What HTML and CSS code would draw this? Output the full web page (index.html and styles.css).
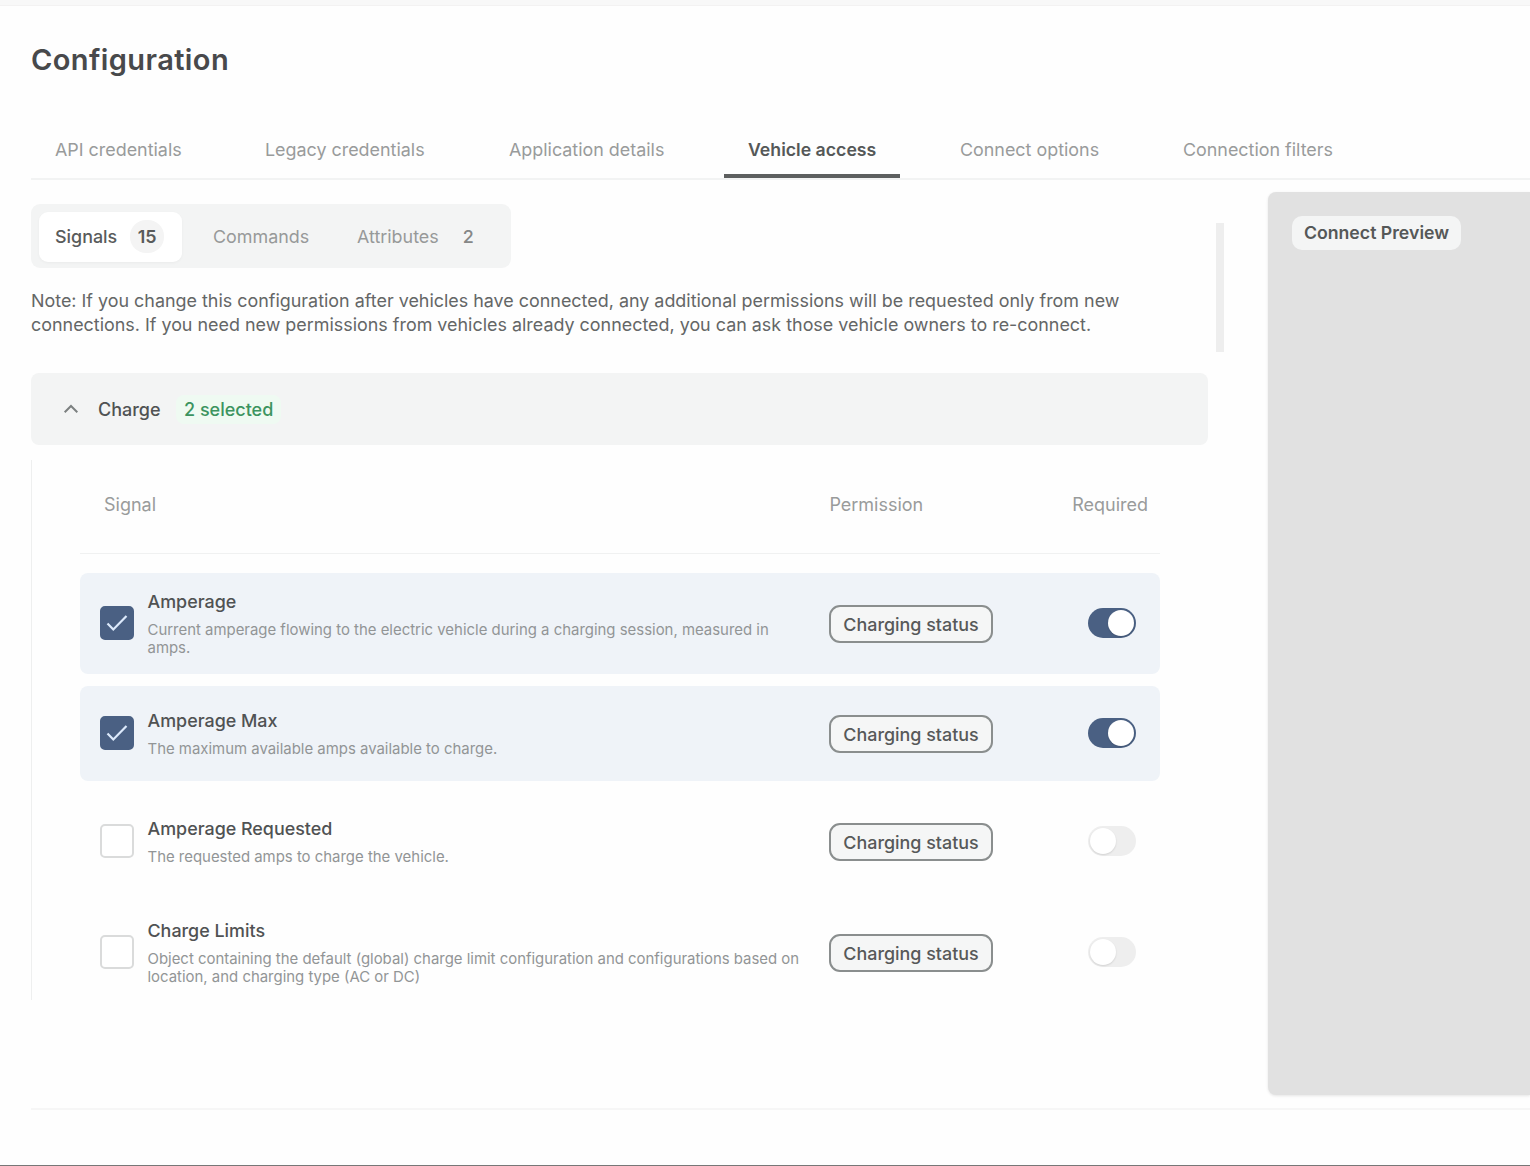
FILE: index.html
```html
<!DOCTYPE html>
<html lang="en">
<head>
<meta charset="utf-8">
<title>Configuration</title>
<link rel="stylesheet" href="styles.css">
</head>
<body>
<div class="page">
  <h1 class="title">Configuration</h1>
  <nav class="tabs">
    <a class="tab t-api">API credentials</a>
    <a class="tab t-legacy">Legacy credentials</a>
    <a class="tab t-app">Application details</a>
    <a class="tab tab-active">Vehicle access</a>
    <a class="tab t-opt">Connect options</a>
    <a class="tab t-filter">Connection filters</a>
  </nav>
  <div class="content">
    <main class="main">
      <div class="segments">
        <div class="segment segment-active"><span>Signals</span><span class="count">15</span></div>
        <div class="segment segment-commands"><span>Commands</span></div>
        <div class="segment segment-attributes"><span>Attributes</span><span class="count-plain">2</span></div>
      </div>
      <p class="note">Note: If you change this configuration after vehicles have connected, any additional permissions will be requested only from new<br>connections. If you need new permissions from vehicles already connected, you can ask those vehicle owners to re-connect.</p>
      <div class="group">
        <svg class="chevron" width="16" height="10" viewBox="0 0 16 10"><path d="M1.700 8.200 8 2l6.300 6.200" fill="none" stroke="#7c8080" stroke-width="2"/></svg>
        <span class="group-name">Charge</span>
        <span class="selected">2 selected</span>
      </div>
      <section class="table">
        <div class="head"><span class="col-signal">Signal</span><span class="col-permission">Permission</span><span class="col-required">Required</span></div>
        <div class="row row-on row-tall">
          <span class="check check-on"><svg width="22" height="18" viewBox="0 0 22 18"><path d="M1.500 9.500 7.300 15.500 20.500 2" fill="none" stroke="#dce9fb" stroke-width="2.200"/></svg></span>
          <div class="text"><div class="name">Amperage</div><div class="desc">Current amperage flowing to the electric vehicle during a charging session, measured in<br>amps.</div></div>
          <div class="permission"><span class="badge">Charging status</span></div>
          <span class="toggle toggle-on"></span>
        </div>
        <div class="row row-on row-short">
          <span class="check check-on"><svg width="22" height="18" viewBox="0 0 22 18"><path d="M1.500 9.500 7.300 15.500 20.500 2" fill="none" stroke="#dce9fb" stroke-width="2.200"/></svg></span>
          <div class="text"><div class="name">Amperage Max</div><div class="desc">The maximum available amps available to charge.</div></div>
          <div class="permission"><span class="badge">Charging status</span></div>
          <span class="toggle toggle-on"></span>
        </div>
        <div class="row row-short">
          <span class="check"></span>
          <div class="text"><div class="name">Amperage Requested</div><div class="desc">The requested amps to charge the vehicle.</div></div>
          <div class="permission"><span class="badge">Charging status</span></div>
          <span class="toggle"></span>
        </div>
        <div class="row row-tall">
          <span class="check"></span>
          <div class="text"><div class="name">Charge Limits</div><div class="desc">Object containing the default (global) charge limit configuration and configurations based on<br>location, and charging type (AC or DC)</div></div>
          <div class="permission"><span class="badge">Charging status</span></div>
          <span class="toggle"></span>
        </div>
      </section>
    </main>
    <div class="scrollbar"></div>
    <aside class="preview"><span class="preview-label">Connect Preview</span></aside>
  </div>
  <footer class="footer"></footer>
</div>
</body>
</html>
```
FILE: styles.css
```css
* { box-sizing: border-box; }
body { margin: 0; background: #fefefe; font-family: Inter, "Liberation Sans", sans-serif; color: #505253; }
.page { display: flex; flex-direction: column; width: 1530px; height: 1166px; padding-left: 31px; overflow: hidden; border-top: 5px solid #f8f8f8; border-bottom: 1px solid #777; box-shadow: inset 0 1px #f3f2f2; }
.title { margin: 35px 0 0; height: 40px; line-height: 40px; font-size: 29px; font-weight: 600; color: #48494b; letter-spacing: 0.4px; }
.tabs { display: flex; gap: 36px; height: 60px; margin-top: 40px; flex: none; border-bottom: 2px solid #f2f3f3; color: #999b9b; font-size: 17.9px; }
.tab { height: 58px; padding-left: 24px; line-height: 59px; white-space: nowrap; }
.t-api { width: 174px; }
.t-legacy { width: 208px; }
.t-app { width: 203px; }
.t-opt { width: 187px; }
.t-filter { width: 198px; }
.tab-active { width: 176px; color: #555858; font-weight: 600; font-size: 17.7px; border-bottom: 4px solid #5d5f5f; }
.content { display: flex; height: 928px; flex: none; }
.main { width: 1177px; flex: none; }
.segments { display: flex; align-items: center; width: 480px; height: 64px; margin-top: 24px; padding: 1px 8px 0; background: #f3f4f4; border-radius: 9px; font-size: 17.9px; color: #979999; }
.segment { display: flex; align-items: center; height: 50px; }
.segment-active { width: 143px; padding-left: 16px; gap: 13px; background: #fff; border-radius: 9px; color: #595b5b; font-weight: 500; box-shadow: 0 1px 3px rgba(0,0,0,.04); }
.count { width: 34px; height: 33px; line-height: 33px; border-radius: 16px; background: #f4f4f4; text-align: center; font-weight: 600; }
.segment-commands { width: 145px; padding-left: 31px; }
.segment-attributes { padding-left: 30px; gap: 24px; }
.count-plain { color: #858787; font-weight: 500; }
.note { margin: 21px 0 0; line-height: 24px; height: 48px; font-size: 17.92px; white-space: nowrap; color: #646666; }
.group { display: flex; align-items: center; height: 72px; margin-top: 36px; padding-left: 32px; background: #f3f4f4; border-radius: 8px; font-size: 18px; font-weight: 500; }
.group-name { width: 62px; margin-left: 19px; }
.selected { margin-left: 16px; padding: 4px 8px; color: #3c9460; background: #effaf2; border-radius: 8px; }
.table { height: 540px; margin-top: 15px; padding: 0 48px; border-left: 1px solid #eeefef; overflow: hidden; }
.head { display: flex; align-items: center; height: 94px; padding: 0 12px 4px 24px; border-bottom: 1px solid #f0f1f1; margin-bottom: 19px; font-size: 18px; color: #999b9b; }
.col-signal { width: 726px; }
.col-permission { width: 243px; }
.row { display: flex; align-items: center; padding-left: 20px; border-radius: 8px; }
.row-on { background: #eff3f8; }
.row-tall { height: 101px; margin-bottom: 12px; }
.row-short { height: 95px; margin-bottom: 13px; }
.check { display: flex; align-items: center; justify-content: center; width: 34px; height: 34px; margin-bottom: 2px; flex: none; border: 2px solid #dadbdb; border-radius: 5px; background: #fff; }
.check-on { background: #4a6083; border-color: #4a6083; }
.text { width: 668px; margin-left: 13.500px; flex: none; white-space: nowrap; }
.name { line-height: 24px; font-size: 17.9px; font-weight: 500; color: #505253; }
.desc { margin-top: 7px; line-height: 18px; font-size: 14.93px; color: #929596; }
.permission { width: 259px; margin-left: 13.500px; flex: none; }
.badge { display: block; width: 164px; height: 38px; line-height: 35px; border: 2px solid #8a8e8e; border-radius: 11px; background: #f5f6f6; text-align: center; font-size: 17.9px; font-weight: 500; color: #575959; white-space: nowrap; }
.toggle { width: 48px; height: 30px; margin-bottom: 2px; padding: 2px; border-radius: 15px; background: #eee; }
.toggle::after { content: ""; display: block; width: 26px; height: 26px; border-radius: 50%; background: #fff; box-shadow: 0 1px 2px rgba(0,0,0,.12); }
.toggle-on { background: #4a6083; }
.toggle-on::after { margin-left: 18px; }
.scrollbar { width: 8px; height: 129px; margin: 43px 44px 0 8px; background: #eee; flex: none; }
.preview { width: 262px; height: 903px; margin-top: 12px; padding: 24px; border-radius: 8px 0 0 8px; background: #e1e1e1; box-shadow: 0 1px 3px rgba(0,0,0,.1); }
.preview-label { display: block; width: 169px; height: 34px; line-height: 34px; border-radius: 10px; background: #f4f5f5; text-align: center; font-size: 17.7px; font-weight: 600; color: #555858; white-space: nowrap; }
.footer { height: 2px; background: #f6f6f6; flex: none; }
```
